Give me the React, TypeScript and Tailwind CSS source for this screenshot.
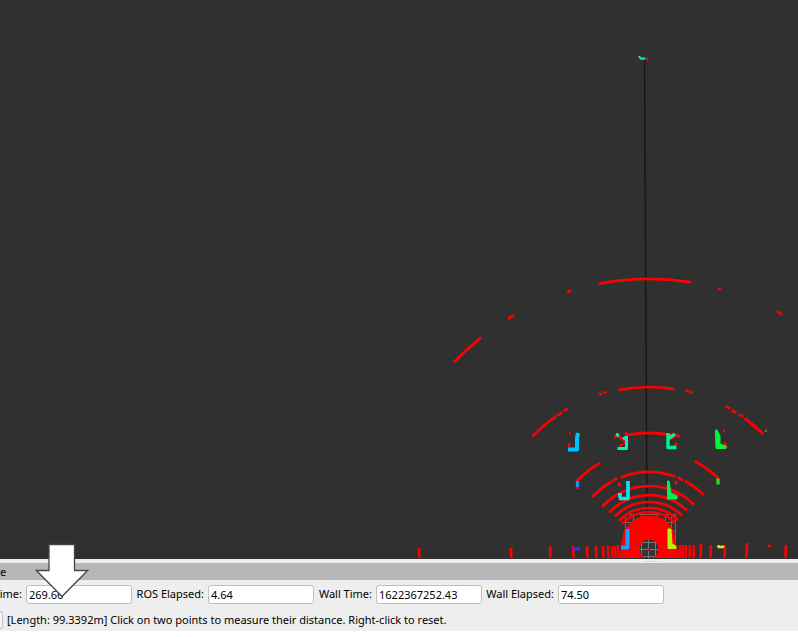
import React from "react";

const CX = 649;
const CY = 549;

/** Upper part of a lidar ring between two x positions. */
function ring(r: number, x0: number, x1: number): string {
  const y = (x: number) => CY - Math.sqrt(r * r - (x - CX) * (x - CX));
  return `M${x0} ${y(x0).toFixed(1)}A${r} ${r} 0 0 1 ${x1} ${y(x1).toFixed(1)}`;
}

const RINGS: [number, number, number][] = [
  [270, 455, 480], [270, 509, 513], [270, 600, 690],
  [162, 533, 548], [162, 550, 555], [162, 558, 561], [162, 565, 567],
  [162, 620, 673], [162, 746, 762],
  [116, 628, 674],
  [99, 578, 599], [99, 696, 717],
  [77, 593, 611], [77, 622, 674], [77, 686, 703],
  [63, 603, 693], [54, 610, 686], [47, 616, 681],
  [41, 620, 677], [37, 623, 675],
];

const TICKS: [number, number][] = [
  [419, 548], [511, 548], [550, 546], [573, 546], [587, 546], [596, 546], [603, 546],
  [608, 546], [612, 546], [615, 546], [618, 545], [680, 545], [683, 545], [686, 545],
  [690, 545], [694, 545], [701, 544], [711, 545], [725, 545], [747, 543], [786, 545],
];

function PointCloud() {
  return (
    <svg viewBox="0 0 798 559" className="block w-full bg-[#303030]" role="img" aria-label="Lidar point cloud">
      <path d="M644.5 60L647 515" stroke="#151515" strokeWidth="1.4" />
      <g stroke="#8c8c8c" strokeWidth="1" opacity=".65">
        <path d="M625 514.5H676M625 522.5H676M625 530.5H676M625 538.5H676" />
        <path d="M625.5 514V535M633.5 514V530M641.5 514V530M657.5 514V530M665.5 514V530M671.5 514V535M675.5 514V547" />
      </g>
      <path d="M619 558C622 551 620 546 622 540L624 530L629 524L635 519L642 516H656L664 519L669 524L674 531L676 545L680 558Z" fill="#f00" />
      <g fill="none" stroke="#f00" strokeWidth="2.7" strokeLinecap="square">
        {RINGS.map(([r, a, b]) => (
          <path key={`${r}-${a}`} d={ring(r, a, b)} />
        ))}
        <path d="M727 407L729 408M733 411L735 412M740 415L742 416M746 419L762 433" />
        <path d="M568.5 291.5L570 291M719.5 289H720M778 312L781 314M600 394H601M605 392.5H605.5M687 391H688M691 392.5H691.5" />
        <path d="M614 480L616 479M619 484L620 485M679 478L682 480M676 482V483" />
      </g>
      <path d={TICKS.map(([x, y]) => `M${x} ${y}L${x + (x < 619 ? 0.5 : -0.5)} 558`).join("")} stroke="#f00" strokeWidth="2.6" />

      <g fill="none" strokeLinejoin="round">
        <g stroke="#f00" strokeWidth="2.4">
          <path d="M569 432.5H571M569 443V448M577 479V489M614 438L618 436L626 442M626 432V437M619 446L623 444M616 434H619M625 444V438" />
          <path d="M666 434L671 439L678 434M677 436.5H680M673 447L677 443M716 430L718 433M723 431H725M724 442L727 448M718 477V484M766 429V432" />
          <path d="M619 496L622 493M674 495L677 491M676 496L679 495M639 59H648" />
        </g>
        <path d="M578 433L577 438V449.5H568" stroke="#00bfff" strokeWidth="4" />
        <path d="M577.5 481V487" stroke="#218cff" strokeWidth="3" />
        <path d="M626.5 436V448.5H617.5M616 434L619 436M623 439L626 437" stroke="#00edc5" strokeWidth="3" />
        <path d="M668 433V447.5H676.5M669 438L675 434" stroke="#00f393" strokeWidth="3.4" />
        <path d="M715.5 430L717 430L720 436V444L726 446V448.5H716Z" fill="#00f637" stroke="#00f637" strokeWidth="1" />
        <path d="M628 481V498.5H619M620 498V493" stroke="#00edf0" strokeWidth="3.6" />
        <path d="M667.5 481H669L671 493L677 496V499H667.5Z" fill="#00f050" stroke="#00f050" strokeWidth="1" />
        <path d="M718 478.5V484.5" stroke="#27d829" strokeWidth="3.4" />
        <path d="M766 430V432" stroke="#488c22" strokeWidth="1.5" />
        <path d="M627.5 529V547.5H621" stroke="#209cff" strokeWidth="4" />
        <path d="M668 529H671L672 544L676 546V548.5H668Z" fill="#b5f500" stroke="#b5f500" strokeWidth="1" />
        <path d="M639.5 56V58M640 58.5H645" stroke="#12edbf" strokeWidth="2" />
        <path d="M573.5 549.5L580 548.5" stroke="#2438ff" strokeWidth="3" />
        <path d="M718.5 545V547H723V545.5" stroke="#e5e600" strokeWidth="2.4" />
        <path d="M768 546H771" stroke="#f00" strokeWidth="2.4" />
      </g>

      <clipPath id="sensor"><circle cx="649" cy="549" r="9.5" /></clipPath>
      <g clipPath="url(#sensor)">
        <path d="M638 538H660V560H638Z" fill="#343434" />
        <path d="M641.5 538V560M648.5 538V560M655.5 538V560M638 542.5H660M638 549.5H660M638 556.5H660" stroke="#777" strokeWidth="1" />
        <circle cx="649" cy="550" r="1.3" fill="#e00" />
      </g>
    </svg>
  );
}

function TimeField({ id, label, value, labelClass }: { id: string; label: string; value: string; labelClass: string }) {
  return (
    <div className="flex shrink-0 items-center gap-1">
      <label htmlFor={id} className={`flex justify-end whitespace-nowrap ${labelClass}`}>{label}</label>
      <input
        id={id}
        defaultValue={value}
        className="h-[19px] w-[106px] rounded-[3px] border border-[#bebebe] bg-white px-[2px] text-[11px] outline-none"
      />
    </div>
  );
}

export default function App() {
  return (
    <main className="min-h-screen overflow-hidden bg-white font-['Noto_Sans','Open_Sans',sans-serif] text-[11px] leading-4 text-black">
      <PointCloud />
      <section className="relative bg-[#eeeeee]">
        <div className="flex h-1 items-center gap-[2px] pl-[81%]" aria-hidden="true">
          {[0, 1, 2, 3, 4].map((n) => (
            <span key={n} className="size-px bg-[#bcbcbc]" />
          ))}
        </div>
        <h2 className="flex h-[17px] items-center bg-[#b7b7b7]">e</h2>
        <div className="flex h-7 items-center gap-1">
          <TimeField id="ros-time" label="ime:" value="269.66" labelClass="w-[22px]" />
          <TimeField id="ros-elapsed" label="ROS Elapsed:" value="4.64" labelClass="w-[68px]" />
          <TimeField id="wall-time" label="Wall Time:" value="1622367252.43" labelClass="w-[54px]" />
          <TimeField id="wall-elapsed" label="Wall Elapsed:" value="74.50" labelClass="w-[68px]" />
        </div>
        <div className="flex h-[23px] items-center gap-1">
          <button aria-label="Reset" className="h-[18px] w-[3px] rounded-r-[3px] border border-l-0 border-[#bebebe] bg-[#f7f7f7]" />
          <p className="whitespace-nowrap">[Length: 99.3392m] Click on two points to measure their distance. Right-click to reset.</p>
        </div>
        <svg viewBox="0 0 54 56" className="absolute -top-4 left-[35px] h-[56px] w-[54px]" aria-hidden="true">
          <path d="M14 1.5H39.5V27.5H52.5L27 53.5L1.5 27.5H14Z" fill="#fff" stroke="#484848" strokeWidth="1.3" />
        </svg>
      </section>
    </main>
  );
}
